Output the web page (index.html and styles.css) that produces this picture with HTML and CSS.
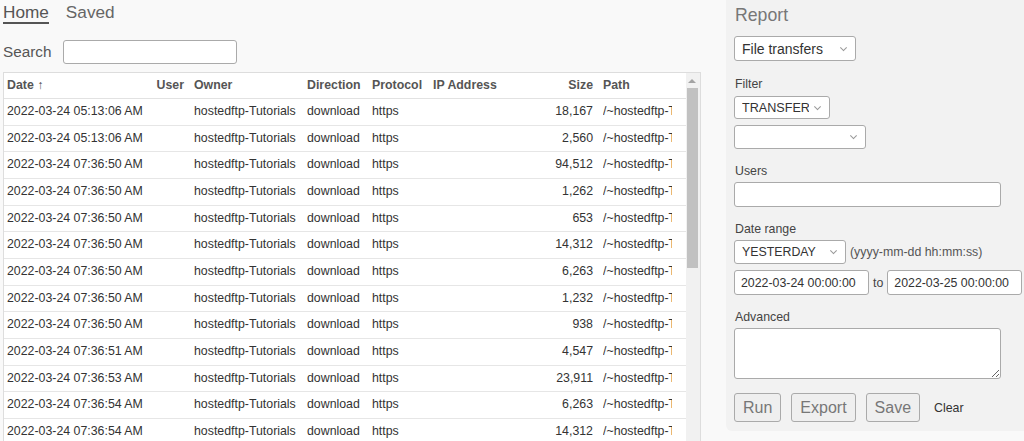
FILE: index.html
```
<!DOCTYPE html>
<html lang="en">
<head>
    <meta charset="UTF-8">
    <meta name="viewport" content="width=device-width, initial-scale=1.0">
    <title>Reports</title>
    <link rel="stylesheet" href="styles.css">
</head>
<body>
    <div class="page">
        <div class="main">
            <nav class="tabs">
                <a class="tab active" href="#">Home</a>
                <a class="tab" href="#">Saved</a>
            </nav>

            <div class="search">
                <label for="search">Search</label>
                <input type="text" id="search" class="search-input">
            </div>

            <div class="results">
                <div class="results-body">
                    <table class="grid">
                        <colgroup>
                            <col class="c-date">
                            <col class="c-user">
                            <col class="c-owner">
                            <col class="c-dir">
                            <col class="c-proto">
                            <col class="c-ip">
                            <col class="c-size">
                            <col class="c-path">
                        </colgroup>
                        <thead>
                            <tr>
                                <th>Date &uarr;</th>
                                <th class="num">User</th>
                                <th>Owner</th>
                                <th>Direction</th>
                                <th>Protocol</th>
                                <th>IP Address</th>
                                <th class="num">Size</th>
                                <th class="path">Path</th>
                            </tr>
                        </thead>
                        <tbody>
                            <tr><td>2022-03-24 05:13:06 AM</td><td></td><td>hostedftp-Tutorials</td><td>download</td><td>https</td><td></td><td class="num">18,167</td><td class="path"><div class="clip">/~hostedftp-Tutorials/Welcome.pdf</div></td></tr>
                            <tr><td>2022-03-24 05:13:06 AM</td><td></td><td>hostedftp-Tutorials</td><td>download</td><td>https</td><td></td><td class="num">2,560</td><td class="path"><div class="clip">/~hostedftp-Tutorials/readme.txt</div></td></tr>
                            <tr><td>2022-03-24 07:36:50 AM</td><td></td><td>hostedftp-Tutorials</td><td>download</td><td>https</td><td></td><td class="num">94,512</td><td class="path"><div class="clip">/~hostedftp-Tutorials/Getting Started.pdf</div></td></tr>
                            <tr><td>2022-03-24 07:36:50 AM</td><td></td><td>hostedftp-Tutorials</td><td>download</td><td>https</td><td></td><td class="num">1,262</td><td class="path"><div class="clip">/~hostedftp-Tutorials/FTP/clients.txt</div></td></tr>
                            <tr><td>2022-03-24 07:36:50 AM</td><td></td><td>hostedftp-Tutorials</td><td>download</td><td>https</td><td></td><td class="num">653</td><td class="path"><div class="clip">/~hostedftp-Tutorials/FTP/ports.txt</div></td></tr>
                            <tr><td>2022-03-24 07:36:50 AM</td><td></td><td>hostedftp-Tutorials</td><td>download</td><td>https</td><td></td><td class="num">14,312</td><td class="path"><div class="clip">/~hostedftp-Tutorials/SFTP/keys.pdf</div></td></tr>
                            <tr><td>2022-03-24 07:36:50 AM</td><td></td><td>hostedftp-Tutorials</td><td>download</td><td>https</td><td></td><td class="num">6,263</td><td class="path"><div class="clip">/~hostedftp-Tutorials/SFTP/setup.pdf</div></td></tr>
                            <tr><td>2022-03-24 07:36:50 AM</td><td></td><td>hostedftp-Tutorials</td><td>download</td><td>https</td><td></td><td class="num">1,232</td><td class="path"><div class="clip">/~hostedftp-Tutorials/Web/upload.txt</div></td></tr>
                            <tr><td>2022-03-24 07:36:50 AM</td><td></td><td>hostedftp-Tutorials</td><td>download</td><td>https</td><td></td><td class="num">938</td><td class="path"><div class="clip">/~hostedftp-Tutorials/Web/share.txt</div></td></tr>
                            <tr><td>2022-03-24 07:36:51 AM</td><td></td><td>hostedftp-Tutorials</td><td>download</td><td>https</td><td></td><td class="num">4,547</td><td class="path"><div class="clip">/~hostedftp-Tutorials/Web/folders.pdf</div></td></tr>
                            <tr><td>2022-03-24 07:36:53 AM</td><td></td><td>hostedftp-Tutorials</td><td>download</td><td>https</td><td></td><td class="num">23,911</td><td class="path"><div class="clip">/~hostedftp-Tutorials/Users/permissions.pdf</div></td></tr>
                            <tr><td>2022-03-24 07:36:54 AM</td><td></td><td>hostedftp-Tutorials</td><td>download</td><td>https</td><td></td><td class="num">6,263</td><td class="path"><div class="clip">/~hostedftp-Tutorials/Users/groups.pdf</div></td></tr>
                            <tr><td>2022-03-24 07:36:54 AM</td><td></td><td>hostedftp-Tutorials</td><td>download</td><td>https</td><td></td><td class="num">14,312</td><td class="path"><div class="clip">/~hostedftp-Tutorials/Users/invite.pdf</div></td></tr>
                            <tr><td>2022-03-24 07:36:55 AM</td><td></td><td>hostedftp-Tutorials</td><td>download</td><td>https</td><td></td><td class="num">938</td><td class="path"><div class="clip">/~hostedftp-Tutorials/Reports/audit.txt</div></td></tr>
                            <tr><td>2022-03-24 07:36:55 AM</td><td></td><td>hostedftp-Tutorials</td><td>download</td><td>https</td><td></td><td class="num">1,232</td><td class="path"><div class="clip">/~hostedftp-Tutorials/Reports/export.txt</div></td></tr>
                        </tbody>
                    </table>
                </div>
                <div class="scrollbar">
                    <span class="scroll-up"></span>
                    <span class="scroll-thumb"></span>
                </div>
            </div>
        </div>

        <aside class="side">
            <h2 class="side-title">Report</h2>

            <span class="select-wrap">
                <select class="select select-report">
                    <option>File transfers</option>
                    <option>Logins</option>
                    <option>Storage</option>
                </select>
            </span>

            <label class="field-label filter-label">Filter</label>
            <span class="select-wrap">
                <select class="select select-type">
                    <option>TRANSFER</option>
                    <option>LOGIN</option>
                </select>
            </span>
            <span class="select-wrap select-spaced">
                <select class="select select-sub">
                    <option></option>
                    <option>upload</option>
                    <option>download</option>
                </select>
            </span>

            <label class="field-label" for="users">Users</label>
            <input type="text" id="users" class="text-input wide-input">

            <label class="field-label">Date range</label>
            <div class="range-row">
                <span class="select-wrap">
                    <select class="select select-range">
                        <option>YESTERDAY</option>
                        <option>TODAY</option>
                        <option>LAST 7 DAYS</option>
                    </select>
                </span>
                <span class="hint">(yyyy-mm-dd hh:mm:ss)</span>
            </div>
            <div class="dates-row">
                <input type="text" class="text-input date-input" value="2022-03-24 00:00:00">
                <span class="to">to</span>
                <input type="text" class="text-input date-input date-end" value="2022-03-25 00:00:00">
            </div>

            <label class="field-label" for="advanced">Advanced</label>
            <textarea id="advanced" class="text-input wide-input advanced"></textarea>

            <div class="actions">
                <button class="btn">Run</button>
                <button class="btn">Export</button>
                <button class="btn">Save</button>
                <a class="clear" href="#">Clear</a>
            </div>
        </aside>
    </div>
</body>
</html>
```

FILE: styles.css
```
html, body {
    margin: 0;
    height: 100%;
    overflow: hidden;
}
body {
    font-family: "Liberation Sans", Arial, sans-serif;
    background: #f9f9f9;
    color: #333;
}
.page {
    display: flex;
    align-items: flex-start;
}

/* left column */
.main {
    width: 699px;
    padding-left: 3px;
    flex-shrink: 0;
}
.tabs {
    display: flex;
    gap: 17px;
    padding-top: 2px;
}
.tab {
    font-size: 17.2px;
    line-height: 20px;
    color: #666;
    text-decoration: none;
    border-bottom: 2px solid transparent;
}
.tab.active {
    color: #555;
    border-bottom-color: #555;
}
.search {
    display: flex;
    align-items: center;
    gap: 12px;
    margin-top: 16px;
}
.search label {
    font-size: 15.3px;
    color: #555;
}
.search-input {
    width: 174px;
    height: 24px;
    box-sizing: border-box;
    border: 1px solid #aaa;
    border-radius: 3px;
    background: #fff;
}
.results {
    display: flex;
    box-sizing: border-box;
    width: 698px;
    height: 380px;
    margin-top: 8px;
    border: 1px solid #ddd;
    background: #fff;
}
.results-body {
    flex: 1;
    overflow: hidden;
}

/* list scrollbar: track, up arrow and thumb */
.scrollbar {
    width: 14px;
    flex-shrink: 0;
    background: #f1f1f1;
    display: flex;
    flex-direction: column;
    align-items: center;
}
.scroll-up {
    height: 15px;
    display: flex;
    align-items: center;
}
.scroll-up::before {
    content: "";
    border-left: 4px solid transparent;
    border-right: 4px solid transparent;
    border-bottom: 4px solid #a3a3a3;
    margin-left: -2px;
}
.scroll-thumb {
    width: 11px;
    height: 180px;
    margin-left: -2px;
    background: #c1c1c1;
}

.grid {
    width: 682px;
    table-layout: fixed;
    border-collapse: separate;
    border-spacing: 0;
    font-size: 12.35px;
}
.c-date { width: 146px; }
.c-user { width: 39px; }
.c-owner { width: 113px; }
.c-dir { width: 65px; }
.c-proto { width: 61px; }
.c-ip { width: 111px; }
.c-size { width: 59px; }
.c-path { width: 88px; }
.grid th {
    text-align: left;
    font-weight: bold;
    color: #555;
    padding: 5px;
    line-height: 15px;
    border-bottom: 1px solid #e2e2e2;
    white-space: nowrap;
}
.grid td {
    padding: 5px;
    line-height: 15.67px;
    border-bottom: 1px solid #e6e6e6;
    white-space: nowrap;
    color: #333;
}
.grid th:first-child,
.grid td:first-child {
    padding-left: 3px;
}
.grid .num {
    text-align: right;
}
.grid .path {
    padding-right: 14px;
}
.clip {
    overflow: hidden;
}

/* right column */
.side {
    flex: 1;
    margin-left: 24px;
    padding: 5px 7px 9px 8px;
    background: #f2f2f2;
    border-bottom-left-radius: 6px;
    font-size: 12.35px;
    color: #444;
}
.side-title {
    margin: 0 0 11px 1px;
    font-size: 17.7px;
    line-height: 20px;
    font-weight: normal;
    color: #777;
}
.select-wrap {
    position: relative;
    display: block;
    width: max-content;
}
.select-wrap::after {
    content: "";
    position: absolute;
    right: 10px;
    top: 50%;
    width: 4px;
    height: 4px;
    border-right: 1px solid #999;
    border-bottom: 1px solid #999;
    transform: translateY(-75%) rotate(45deg);
    pointer-events: none;
}
.select {
    appearance: none;
    -webkit-appearance: none;
    display: block;
    box-sizing: border-box;
    border: 1px solid #aaa;
    border-radius: 3px;
    background: #fff;
    color: #333;
    font-family: inherit;
    padding: 0 20px 0 7px;
    margin: 0;
}
.select-report {
    width: 122px;
    height: 25px;
    font-size: 14px;
}
.select-type {
    width: 96px;
    height: 23px;
    font-size: 12.6px;
}
.select-sub {
    width: 132px;
    height: 24px;
    font-size: 12.35px;
}
.select-spaced {
    margin-top: 6px;
}
.select-range {
    width: 112px;
    height: 24px;
    font-size: 12.35px;
}
.field-label {
    display: block;
    margin: 15px 0 3px 1px;
    line-height: 15px;
}
.filter-label {
    margin-top: 16px;
    margin-bottom: 4px;
}
.text-input {
    box-sizing: border-box;
    border: 1px solid #aaa;
    border-radius: 3px;
    background: #fff;
    font-family: inherit;
    font-size: 12.35px;
    color: #333;
    margin: 0;
}
.wide-input {
    display: block;
    width: 267px;
    height: 25px;
}
.range-row {
    display: flex;
    align-items: center;
    gap: 4px;
}
.hint {
    color: #555;
}
.dates-row {
    display: flex;
    align-items: center;
    gap: 4px;
    margin-top: 6px;
}
.date-input {
    width: 135px;
    height: 25px;
    padding: 0 6px;
}
.date-end {
    flex: 1;
    min-width: 0;
}
.to {
    color: #444;
}
.advanced {
    height: 51px;
    resize: vertical;
}
.actions {
    display: flex;
    align-items: center;
    gap: 10px;
    margin-top: 14px;
}
.btn {
    height: 29px;
    padding: 0 8px;
    font-family: inherit;
    font-size: 16px;
    color: #777;
    background: #efefef;
    border: 1px solid #aaa;
    border-radius: 3px;
}
.clear {
    margin-left: 4px;
    color: #333;
    text-decoration: none;
}
```
